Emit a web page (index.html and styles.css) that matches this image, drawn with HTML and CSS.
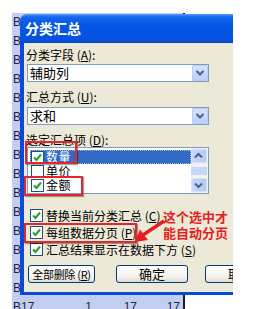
FILE: index.html
```html
<!DOCTYPE html>
<html lang="zh-CN">
<head>
    <meta charset="UTF-8">
    <title>分类汇总</title>
    <link rel="stylesheet" href="styles.css">
</head>
<body>
    <div class="sheet">
        <div class="row"><span class="cell name">B2</span></div>
        <div class="row"><span class="cell name">B3</span></div>
        <div class="row"><span class="cell name">B4</span></div>
        <div class="row"><span class="cell name">B5</span></div>
        <div class="row"><span class="cell name">B6</span></div>
        <div class="row"><span class="cell name">B7</span></div>
        <div class="row"><span class="cell name">B8</span></div>
        <div class="row"><span class="cell name">B9</span></div>
        <div class="row"><span class="cell name">B10</span></div>
        <div class="row"><span class="cell name">B11</span></div>
        <div class="row"><span class="cell name">B12</span></div>
        <div class="row"><span class="cell name">B13</span></div>
        <div class="row"><span class="cell name">B14</span></div>
        <div class="row"><span class="cell name">B15</span></div>
        <div class="row"><span class="cell name">B16</span></div>
        <div class="row">
            <span class="cell name">B17</span>
            <span class="cell num">1</span>
            <span class="cell num">17</span>
            <span class="cell num">17</span>
        </div>
    </div>

    <div class="dialog">
        <div class="titlebar">分类汇总</div>
        <div class="dlg-body">
            <div class="field-label">分类字段 (<u>A</u>):</div>
            <div class="combo">
                <span class="combo-text">辅助列</span>
                <span class="combo-btn">
                    <svg width="16" height="16" viewBox="0 0 16 16"><path d="M4.5 6 L8 9.5 L11.5 6" fill="none" stroke="#4d6185" stroke-width="2"/></svg>
                </span>
            </div>

            <div class="field-label gap">汇总方式 (<u>U</u>):</div>
            <div class="combo tight">
                <span class="combo-text">求和</span>
                <span class="combo-btn">
                    <svg width="16" height="16" viewBox="0 0 16 16"><path d="M4.5 6 L8 9.5 L11.5 6" fill="none" stroke="#4d6185" stroke-width="2"/></svg>
                </span>
            </div>

            <div class="field-label gap">选定汇总项 (<u>D</u>):</div>
            <div class="listbox">
                <div class="items">
                    <div class="item selected">
                        <span class="box"><svg width="11" height="11" viewBox="0 0 11 11"><path d="M2 5.5 L4.5 8 L9 2.5" fill="none" stroke="#21a121" stroke-width="2"/></svg></span>
                        <span class="item-text">数量</span>
                    </div>
                    <div class="item">
                        <span class="box"></span>
                        <span class="item-text">单价</span>
                    </div>
                    <div class="item">
                        <span class="box"><svg width="11" height="11" viewBox="0 0 11 11"><path d="M2 5.5 L4.5 8 L9 2.5" fill="none" stroke="#21a121" stroke-width="2"/></svg></span>
                        <span class="item-text">金额</span>
                    </div>
                </div>
                <div class="scrollbar">
                    <span class="sb-btn"><svg width="15" height="14" viewBox="0 0 15 14"><path d="M4 8.5 L7.5 5 L11 8.5" fill="none" stroke="#4d6185" stroke-width="2"/></svg></span>
                    <span class="sb-track"><span class="sb-thumb"></span></span>
                    <span class="sb-btn"><svg width="15" height="14" viewBox="0 0 15 14"><path d="M4 5.5 L7.5 9 L11 5.5" fill="none" stroke="#4d6185" stroke-width="2"/></svg></span>
                </div>
            </div>

            <div class="options">
                <div class="option">
                    <span class="box"><svg width="11" height="11" viewBox="0 0 11 11"><path d="M2 5.5 L4.5 8 L9 2.5" fill="none" stroke="#21a121" stroke-width="2"/></svg></span>
                    <span>替换当前分类汇总 (<u>C</u>)</span>
                </div>
                <div class="option">
                    <span class="box"><svg width="11" height="11" viewBox="0 0 11 11"><path d="M2 5.5 L4.5 8 L9 2.5" fill="none" stroke="#21a121" stroke-width="2"/></svg></span>
                    <span>每组数据分页 (<u>P</u>)</span>
                </div>
                <div class="option">
                    <span class="box"><svg width="11" height="11" viewBox="0 0 11 11"><path d="M2 5.5 L4.5 8 L9 2.5" fill="none" stroke="#21a121" stroke-width="2"/></svg></span>
                    <span>汇总结果显示在数据下方 (<u>S</u>)</span>
                </div>
            </div>

            <div class="buttons">
                <button class="btn btn-clear">全部删除 (<u>R</u>)</button>
                <button class="btn btn-ok">确定</button>
                <button class="btn btn-cancel">取消</button>
            </div>
        </div>
    </div>

    <!-- annotations drawn on top of the screenshot -->
    <div class="mark mark-qty"></div>
    <div class="mark mark-amount"></div>
    <div class="mark mark-page"></div>
    <div class="note">这个选中才<br>能自动分页</div>
    <svg class="arrow" width="265" height="309" viewBox="0 0 265 309">
        <line x1="164" y1="221" x2="143" y2="235" stroke="#e41e1e" stroke-width="3.5"/>
        <polygon points="135,242 140,229.5 148,240" fill="#e41e1e"/>
    </svg>
</body>
</html>
```

FILE: styles.css
```css
body {
    margin: 0;
    width: 265px;
    height: 309px;
    overflow: hidden;
    position: relative;
    background: #fff;
    font-family: "Noto Sans CJK SC", sans-serif;
    color: #000;
}
u {
    text-decoration: underline;
}
.sheet {
    margin: 13px 0 0 12px;
    width: 171px;
    height: 296px;
    background: #c3cdef;
    border-right: 2px solid #1e1e1e;
}
.row {
    display: grid;
    grid-template-columns: 43px 40px 45px 43px;
    height: 19px;
    font-family: "Liberation Sans", sans-serif;
    font-size: 12px;
    line-height: 19px;
    color: #23234a;
}
.cell.name {
    padding-left: 1px;
}
.cell.num {
    text-align: right;
    padding-right: 3px;
}
.dialog {
    position: absolute;
    left: 20px;
    top: 14px;
    width: 213px;
    height: 281px;
    overflow: hidden;
    border-radius: 7px 0 0 0;
    display: flex;
    flex-direction: column;
}
.titlebar {
    height: 29px;
    line-height: 29px;
    padding-left: 5px;
    color: #fff;
    font-size: 14px;
    font-weight: 700;
    background: linear-gradient(#5a9af8 0, #1467ee 3px, #0656e6 40%, #0453e2 85%, #0845c8 100%);
    flex: none;
}
.dlg-body {
    flex: 1;
    background: #ece9d8;
    border-left: 4px solid #0b4ad8;
    border-bottom: 3px solid #0b4ad8;
    padding: 5px 0 0 2px;
    font-size: 12px;
}
.field-label {
    height: 14px;
    line-height: 14px;
    white-space: nowrap;
}
.field-label.gap {
    margin-top: 8px;
}
.combo {
    margin: 2px 0 0 1px;
    width: 182px;
    height: 18px;
    box-sizing: border-box;
    border: 1px solid #7f9db9;
    background: #fff;
    display: flex;
    align-items: center;
    justify-content: space-between;
}
.combo.tight {
    margin-top: 3px;
}
.combo-text {
    font-size: 13px;
    line-height: 16px;
    padding-left: 2px;
}
.combo-btn {
    width: 16px;
    height: 16px;
    border-radius: 2px;
    background: linear-gradient(#d8e5fd, #b9cdf8);
    box-shadow: inset 0 0 0 1px #bccdf3;
    display: flex;
}
.listbox {
    margin-left: 1px;
    width: 182px;
    height: 47px;
    box-sizing: border-box;
    border: 1px solid #7f9db9;
    background: #fff;
    display: flex;
}
.items {
    flex: 1;
    padding: 2px 0 0 2px;
}
.item {
    height: 14px;
    display: flex;
    align-items: center;
    font-size: 12px;
    line-height: 14px;
}
.item-text {
    letter-spacing: 0.5px;
}
.item.selected {
    background: #316ac5;
    color: #fff;
    outline: 1px dotted #9fb7e3;
    outline-offset: -1px;
}
.box {
    width: 11px;
    height: 11px;
    border: 1px solid #1c5180;
    background: #fff;
    display: flex;
    flex: none;
}
.item .box {
    margin: 0 2px 0 1px;
}
.scrollbar {
    width: 16px;
    padding: 1px 1px 1px 0;
    background: #f3f1ec;
    display: flex;
    flex-direction: column;
}
.sb-btn {
    height: 14px;
    border-radius: 2px;
    background: linear-gradient(90deg, #c9d9fc, #b5c9f6);
    box-shadow: inset 0 0 0 1px #d6e2fc;
    display: flex;
}
.sb-track {
    flex: 1;
    display: flex;
    align-items: center;
}
.sb-thumb {
    width: 100%;
    height: 8px;
    background: #c7d7fc;
}
.options {
    margin-top: 13px;
}
.option {
    height: 17px;
    display: flex;
    align-items: center;
    line-height: 17px;
    white-space: nowrap;
}
.option .box {
    margin: 0 3px 0 4px;
}
.buttons {
    margin-top: 7px;
    display: flex;
    white-space: nowrap;
}
.btn {
    height: 18px;
    padding: 0;
    font-family: inherit;
    font-size: 13px;
    line-height: 16px;
    color: #000;
    border: 1px solid #003c74;
    border-radius: 3px;
    background: linear-gradient(#fff, #f3f2ec 70%, #dcd9cd);
    flex: none;
}
.btn-clear {
    width: 67px;
    margin-left: 2px;
    font-size: 11px;
    letter-spacing: -0.3px;
}
.btn-ok {
    width: 72px;
    margin-left: 21px;
}
.btn-cancel {
    width: 72px;
    margin-left: 17px;
}
.mark {
    position: absolute;
    border: 2px solid #e4262a;
    box-shadow: 1px 1px 1px rgba(0, 0, 0, 0.35);
}
.mark-qty {
    left: 25px;
    top: 141px;
    width: 48px;
    height: 19px;
}
.mark-amount {
    left: 24px;
    top: 176px;
    width: 55px;
    height: 16px;
}
.mark-page {
    left: 24px;
    top: 223px;
    width: 109px;
    height: 16px;
}
.note {
    position: absolute;
    left: 163px;
    top: 209px;
    color: #e41e1e;
    font-size: 13px;
    font-weight: 700;
    line-height: 16px;
    white-space: nowrap;
}
.arrow {
    position: absolute;
    left: 0;
    top: 0;
}
```
